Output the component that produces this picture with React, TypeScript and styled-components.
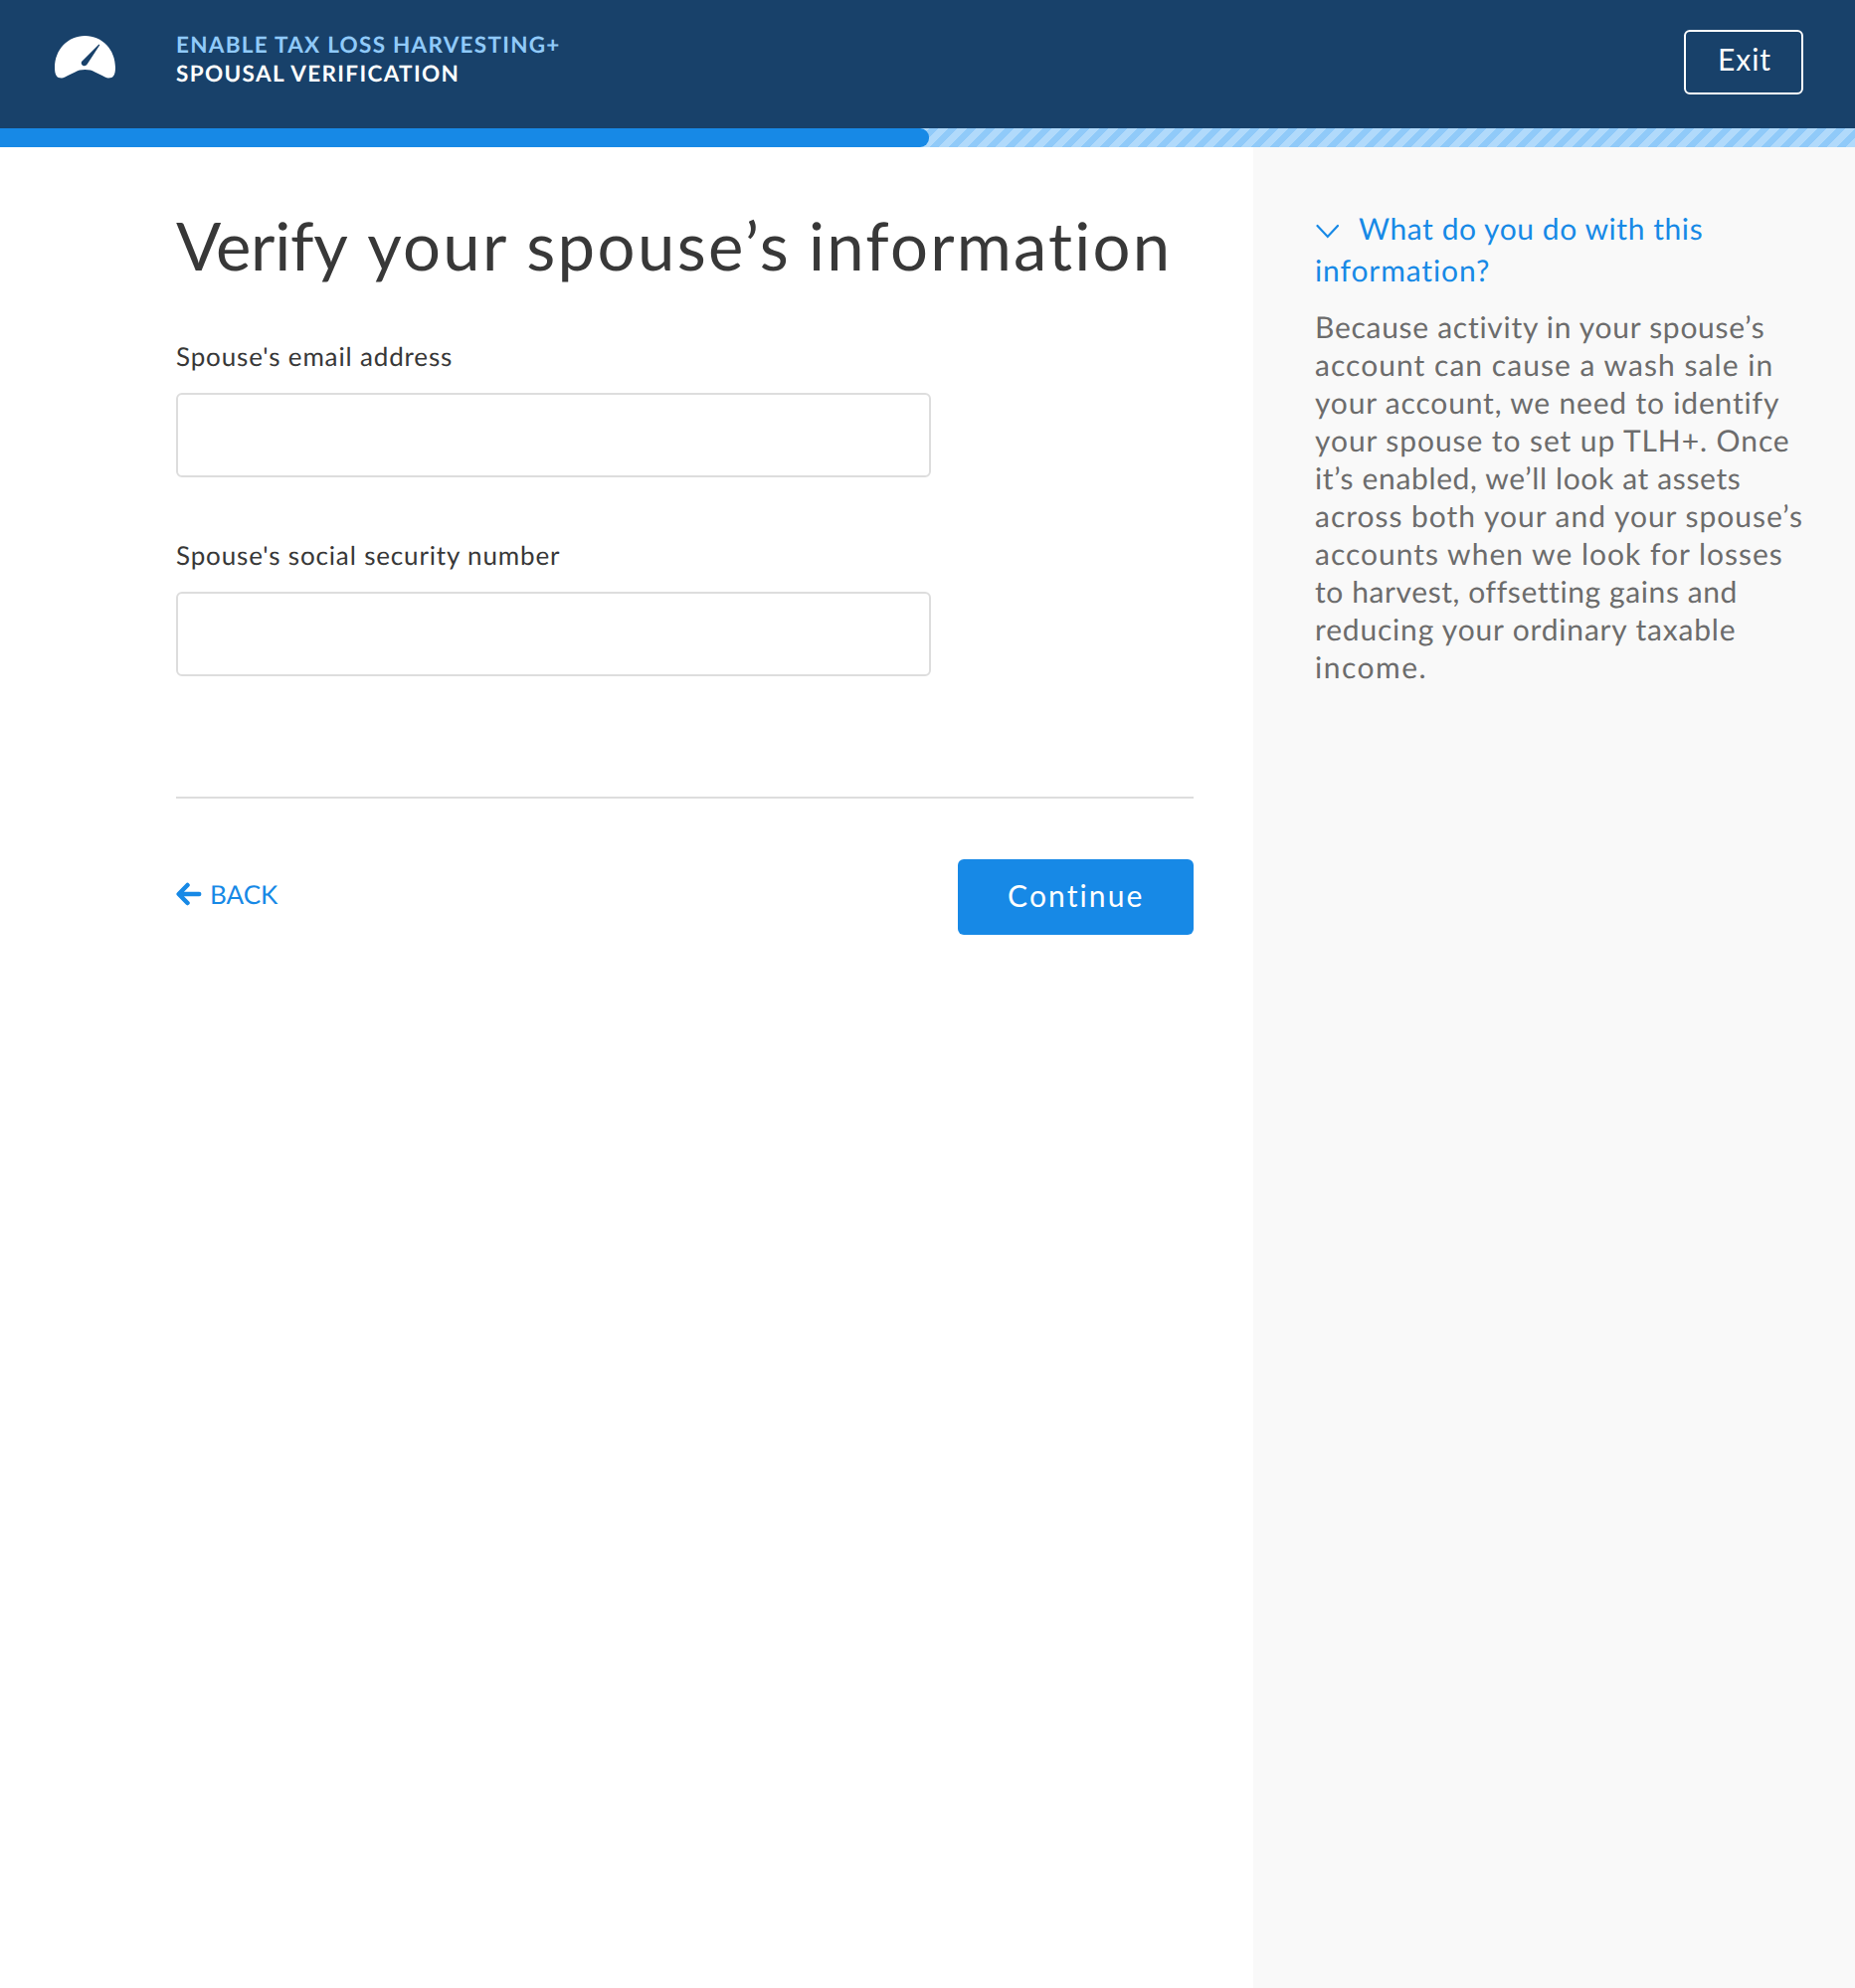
import React from 'react';
import styled, { createGlobalStyle } from 'styled-components';

const GlobalStyle = createGlobalStyle`
  *, *::before, *::after { box-sizing: border-box; }
  html, body { margin: 0; background: #fff; }
  body {
    font-family: Lato, "Open Sans", sans-serif;
    color: #383838;
    text-rendering: geometricPrecision;
    -webkit-font-smoothing: antialiased;
  }
`;

const Page = styled.div`
  display: flex;
  flex-direction: column;
  min-height: 1999px;
`;

const Header = styled.header`
  display: flex;
  align-items: flex-start;
  height: 129px;
  padding: 30px 52px 0 55px;
  background: #18416a;
`;

const Logo = styled.svg`
  width: 61px;
  height: 44px;
  margin: 6px 61px 0 0;
  flex: none;
`;

const Titles = styled.div`
  flex: 1;
  padding-top: 1px;
  font-size: 22.5px;
  font-weight: 700;
  line-height: 28.5px;
  text-transform: uppercase;
`;

const Flow = styled.div`
  color: #90caf9;
  letter-spacing: 1.27px;
`;

const Step = styled.div`
  color: #fff;
  letter-spacing: 1.35px;
`;

const ExitButton = styled.button`
  width: 120px;
  height: 65px;
  padding: 0 0 7px 2px;
  border: 2px solid #fff;
  border-radius: 6px;
  background: none;
  color: #fff;
  font: 400 30px Lato, sans-serif;
  letter-spacing: 1px;
`;

const Track = styled.div`
  height: 19px;
  background: linear-gradient(135deg, #90caf9 25%, #b1dafb 25%, #b1dafb 50%, #90caf9 50%, #90caf9 75%, #b1dafb 75%) 3px 0 / 19px 19px;
`;

const Fill = styled.div`
  width: 934px;
  height: 100%;
  border-radius: 0 9px 9px 0;
  background: #1789e6;
`;

const Body = styled.div`
  display: flex;
  flex: 1;
`;

const Main = styled.main`
  width: 1260px;
  padding: 59px 60px 0 177px;
`;

const Heading = styled.h1`
  margin: 0 0 55px;
  font-size: 67px;
  font-weight: 400;
  line-height: 80px;
  white-space: nowrap;
`;

const Word = styled.span<{ $track: number; $after?: number }>`
  margin-right: ${(p) => p.$after ?? 0}px;
  letter-spacing: ${(p) => p.$track}px;
`;

const Field = styled.div`
  display: flex;
  flex-direction: column;
  margin-bottom: 61.5px;
`;

const Label = styled.label`
  margin-bottom: 21px;
  font-size: 26px;
  line-height: 32px;
  letter-spacing: 0.85px;
`;

const Input = styled.input`
  width: 759px;
  height: 85px;
  border: 2px solid #ddd;
  border-radius: 6px;
  padding: 0 20px;
  background: #fff;
  outline: none;
`;

const Actions = styled.div`
  display: flex;
  align-items: center;
  justify-content: space-between;
  width: 1023px;
  margin-top: 121.5px;
  padding-top: 60.5px;
  border-top: 2px solid #ddd;
`;

const BackLink = styled.a`
  display: flex;
  align-items: center;
  padding-bottom: 5px;
  color: #1789e6;
  font-size: 26px;
  line-height: 32px;
  text-decoration: none;

  svg { margin-right: 8px; }
`;

const Continue = styled.button`
  width: 237.5px;
  height: 76.5px;
  padding: 0 0 4px 1px;
  border: 0;
  border-radius: 6px;
  background: #1789e6;
  color: #fff;
  font: 400 30px Lato, sans-serif;
  letter-spacing: 2.1px;
`;

const Aside = styled.aside`
  flex: 1;
  padding: 60.5px 0 0 62px;
  background: #f9f9f9;
  font-size: 30px;
`;

const Question = styled.div`
  margin-bottom: 17px;
  color: #1789e6;
  line-height: 42px;

  svg { margin-right: 20px; }
`;

const Answer = styled.div`
  color: #6c6c6c;
  line-height: 38px;
`;

const Line = styled.div<{ $track: number }>`
  white-space: nowrap;
  letter-spacing: ${(p) => p.$track}px;
`;

const answer: [string, number][] = [
  ['Because activity in your spouse’s', 0.72],
  ['account can cause a wash sale in', 1.04],
  ['your account, we need to identify', 0.82],
  ['your spouse to set up TLH+. Once', 0.92],
  ['it’s enabled, we’ll look at assets', 0.64],
  ['across both your and your spouse’s', 0.98],
  ['accounts when we look for losses', 1],
  ['to harvest, offsetting gains and', 0.6],
  ['reducing your ordinary taxable', 0.82],
  ['income.', 1.5],
];

export default function App() {
  return (
    <Page>
      <GlobalStyle />
      <Header>
        <Logo viewBox="0 0 61 44">
          <path
            fill="#fff"
            d="M30.500 0C13 0 0 14 0 32C0 39.500 2 42.500 7 42.500C10 42.500 20 36 25 34.500Q30.500 33.500 36 34.500C41 36 51 42.500 54 42.500C59 42.500 61 39.500 61 32C61 14 48 0 30.500 0Z"
          />
          <path fill="#18416a" d="M44.500 8.500L45.300 9.300L32.700 28.500Q31.300 30.800 28.500 30Q26 28.500 27 26Z" />
        </Logo>
        <Titles>
          <Flow>Enable Tax Loss Harvesting+</Flow>
          <Step>Spousal Verification</Step>
        </Titles>
        <ExitButton>Exit</ExitButton>
      </Header>
      <Track>
        <Fill />
      </Track>
      <Body>
        <Main>
          <Heading>
            <Word $track={-0.3} $after={2.6}>Verify</Word>{' '}
            <Word $track={2.3} $after={0.3}>your</Word>{' '}
            <Word $track={2.4} $after={0.6}>spouse’s</Word>{' '}
            <Word $track={2.2}>information</Word>
          </Heading>
          <Field>
            <Label htmlFor="email">Spouse's email address</Label>
            <Input id="email" />
          </Field>
          <Field>
            <Label htmlFor="ssn">Spouse's social security number</Label>
            <Input id="ssn" />
          </Field>
          <Actions>
            <BackLink href="#">
              <svg width="26" height="24" viewBox="0 0 26 24" fill="none" stroke="#1789e6" strokeWidth="4.500" strokeLinecap="round" strokeLinejoin="round">
                <path d="M11.500 3L2.700 12L11.500 21M3.500 12H23.200" />
              </svg>
              BACK
            </BackLink>
            <Continue>Continue</Continue>
          </Actions>
        </Main>
        <Aside>
          <Question>
            <Line $track={0.57}>
              <svg width="24" height="16" viewBox="0 0 24 16" fill="none" stroke="#1789e6" strokeWidth="2.200" strokeLinecap="round">
                <path d="M2.500 2L12.800 13L23 2" />
              </svg>
              What do you do with this
            </Line>
            <Line $track={0.9}>information?</Line>
          </Question>
          <Answer>
            {answer.map(([text, track]) => (
              <Line key={text} $track={track}>{text}</Line>
            ))}
          </Answer>
        </Aside>
      </Body>
    </Page>
  );
}
